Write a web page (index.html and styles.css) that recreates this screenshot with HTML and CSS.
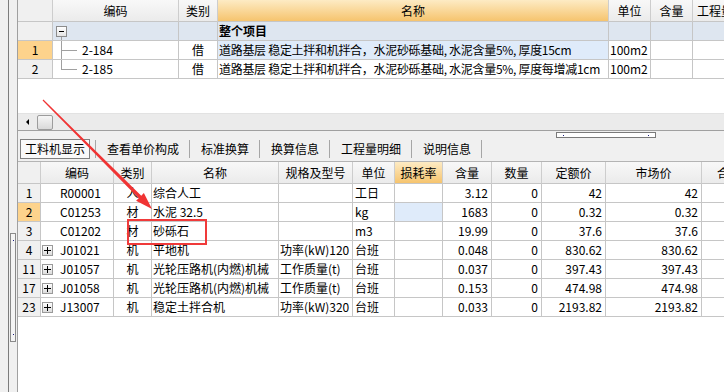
FILE: index.html
```html
<!DOCTYPE html>
<html lang="zh-CN">
<head>
<meta charset="utf-8">
<title>工料机显示</title>
<link rel="stylesheet" href="styles.css">
</head>
<body>
<div class="app">
  <div class="edge"></div>
  <div class="splitter"><div class="vgrip"><i></i><i></i></div></div>
  <div class="main">
    <section class="top-panel">
      <div class="grid top-grid">
        <div class="c hd rh"></div>
        <div class="c hd">编码</div>
        <div class="c hd">类别</div>
        <div class="c hd sel">名称</div>
        <div class="c hd">单位</div>
        <div class="c hd">含量</div>
        <div class="c hd lft">工程量</div>

        <div class="c rh"></div>
        <div class="c grp"><span class="mbox"></span></div>
        <div class="c grp"></div>
        <div class="c grp b">整个项目</div>
        <div class="c grp"></div>
        <div class="c grp"></div>
        <div class="c grp"></div>

        <div class="c rh cur">1</div>
        <div class="c code"><span class="tree"></span>2-184</div>
        <div class="c ctr">借</div>
        <div class="c name curcell">道路基层 稳定土拌和机拌合，水泥砂砾基础, 水泥含量5%, 厚度15cm</div>
        <div class="c unit">100m2</div>
        <div class="c"></div>
        <div class="c"></div>

        <div class="c rh">2</div>
        <div class="c code"><span class="tree last"></span>2-185</div>
        <div class="c ctr">借</div>
        <div class="c name">道路基层 稳定土拌和机拌合，水泥砂砾基础, 水泥含量5%, 厚度每增减1cm</div>
        <div class="c unit">100m2</div>
        <div class="c"></div>
        <div class="c"></div>
      </div>
      <div class="top-fill"></div>
      <div class="hscroll"><span class="larr"></span><span class="thumb"></span></div>
    </section>

    <div class="tabbar">
      <div class="hgrip"><i></i><i></i></div>
      <div class="tabs">
        <span class="tab active">工料机显示</span>
        <span class="tab">查看单价构成</span>
        <span class="tab">标准换算</span>
        <span class="tab">换算信息</span>
        <span class="tab">工程量明细</span>
        <span class="tab last">说明信息</span>
      </div>
    </div>

    <section class="bottom-panel">
      <div class="grid bot-grid">
        <div class="c hd rh"></div>
        <div class="c hd">编码</div>
        <div class="c hd">类别</div>
        <div class="c hd">名称</div>
        <div class="c hd">规格及型号</div>
        <div class="c hd">单位</div>
        <div class="c hd sel">损耗率</div>
        <div class="c hd">含量</div>
        <div class="c hd">数量</div>
        <div class="c hd">定额价</div>
        <div class="c hd">市场价</div>
        <div class="c hd lft2">合价</div>

        <div class="c rh">1</div>
        <div class="c code2"><span class="pbox blank"></span>R00001</div>
        <div class="c ctr">人</div>
        <div class="c txt">综合人工</div>
        <div class="c txt"></div>
        <div class="c txt2">工日</div>
        <div class="c"></div>
        <div class="c num">3.12</div>
        <div class="c num">0</div>
        <div class="c num">42</div>
        <div class="c num">42</div>
        <div class="c"></div>

        <div class="c rh cur">2</div>
        <div class="c code2"><span class="pbox blank"></span>C01253</div>
        <div class="c ctr">材</div>
        <div class="c txt">水泥 32.5</div>
        <div class="c txt"></div>
        <div class="c txt2">kg</div>
        <div class="c curcell"></div>
        <div class="c num">1683</div>
        <div class="c num">0</div>
        <div class="c num">0.32</div>
        <div class="c num">0.32</div>
        <div class="c"></div>

        <div class="c rh">3</div>
        <div class="c code2"><span class="pbox blank"></span>C01202</div>
        <div class="c ctr">材</div>
        <div class="c txt">砂砾石</div>
        <div class="c txt"></div>
        <div class="c txt2">m3</div>
        <div class="c"></div>
        <div class="c num">19.99</div>
        <div class="c num">0</div>
        <div class="c num">37.6</div>
        <div class="c num">37.6</div>
        <div class="c"></div>

        <div class="c rh">4</div>
        <div class="c code2"><span class="pbox"></span>J01021</div>
        <div class="c ctr">机</div>
        <div class="c txt">平地机</div>
        <div class="c txt">功率(kW)120</div>
        <div class="c txt2">台班</div>
        <div class="c"></div>
        <div class="c num">0.048</div>
        <div class="c num">0</div>
        <div class="c num">830.62</div>
        <div class="c num">830.62</div>
        <div class="c"></div>

        <div class="c rh">11</div>
        <div class="c code2"><span class="pbox"></span>J01057</div>
        <div class="c ctr">机</div>
        <div class="c txt">光轮压路机(内燃)机械</div>
        <div class="c txt">工作质量(t)</div>
        <div class="c txt2">台班</div>
        <div class="c"></div>
        <div class="c num">0.037</div>
        <div class="c num">0</div>
        <div class="c num">397.43</div>
        <div class="c num">397.43</div>
        <div class="c"></div>

        <div class="c rh">17</div>
        <div class="c code2"><span class="pbox"></span>J01058</div>
        <div class="c ctr">机</div>
        <div class="c txt">光轮压路机(内燃)机械</div>
        <div class="c txt">工作质量(t)</div>
        <div class="c txt2">台班</div>
        <div class="c"></div>
        <div class="c num">0.153</div>
        <div class="c num">0</div>
        <div class="c num">474.98</div>
        <div class="c num">474.98</div>
        <div class="c"></div>

        <div class="c rh">23</div>
        <div class="c code2"><span class="pbox"></span>J13007</div>
        <div class="c ctr">机</div>
        <div class="c txt">稳定土拌合机</div>
        <div class="c txt">功率(kW)320</div>
        <div class="c txt2">台班</div>
        <div class="c"></div>
        <div class="c num">0.033</div>
        <div class="c num">0</div>
        <div class="c num">2193.82</div>
        <div class="c num">2193.82</div>
        <div class="c"></div>
      </div>
    </section>
  </div>

  <svg class="annot" width="724" height="392" viewBox="0 0 724 392" aria-hidden="true">
    <polygon class="arrow" points="43.42,99.58 141.25,195.71 143.87,193.09 152,209 136.09,200.87 138.71,198.25 42.58,100.42"/>
    <rect class="box" x="128" y="220" width="78" height="24"/>
  </svg>
</div>
</body>
</html>
```

FILE: styles.css
```css
* { box-sizing: border-box; }
html, body { margin: 0; padding: 0; overflow: hidden; }
body {
  background: #f0f0f0;
  font-family: "Noto Sans CJK SC", "Noto Sans", sans-serif;
  font-size: 12px;
  color: #000;
}
.app {
  position: relative;
  width: 724px;
  height: 392px;
  display: flex;
  overflow: hidden;
}
.edge {
  width: 9px;
  flex: none;
  border-right: 1px solid #7c7c7c;
  background: #f0f0f0;
}
.splitter {
  width: 8px;
  flex: none;
  padding: 233px 0 0 1px;
}
.vgrip {
  width: 6px;
  height: 109px;
  border: 1px solid #8a8a8a;
  background: #f4f4f4;
  display: flex;
  flex-direction: column;
  justify-content: space-between;
  align-items: center;
  padding: 6px 0;
}
.vgrip i, .hgrip i {
  display: block;
  width: 1px;
  height: 1px;
  background: #1c1c7c;
}
.main {
  flex: 1;
  min-width: 0;
  border-left: 1px solid #a0a0a0;
  display: flex;
  flex-direction: column;
  overflow: hidden;
}

/* grids */
.grid { display: grid; flex: none; }
.top-grid {
  grid-template-columns: 35px 126px 39px 391px 42px 42px 80px;
  grid-template-rows: 22px repeat(3, 19px);
  width: 755px;
  background: #fff;
}
.bot-grid {
  grid-template-columns: 23px 73px 38px 127px 74px 42px 48px 49px 50px 64px 96px 80px;
  grid-template-rows: 22px repeat(7, 19px);
  width: 764px;
  border-top: 1px solid #b4b4b4;
  background: #fff;
}
.c {
  border-right: 1px solid #c6c6c6;
  border-bottom: 1px solid #c6c6c6;
  display: flex;
  align-items: center;
  white-space: nowrap;
  overflow: hidden;
  line-height: 18px;
  padding: 0;
}
.hd {
  justify-content: center;
  background: linear-gradient(#f8f8f8, #ebebeb);
  border-right-color: #cdcdcd;
}
.hd.sel { background: linear-gradient(#fdebc4, #f6c46e); }
.hd.lft { justify-content: flex-start; padding-left: 4px; }
.hd.lft2 { justify-content: flex-start; padding-left: 15px; }
.rh {
  justify-content: center;
  background: #f0f0f0;
}
.rh.cur { background: #fdd38c; }
.grp { background: #dee6f0; padding-left: 1px; }
.b { font-weight: bold; }
.ctr { justify-content: center; }
.name { padding-left: 1px; letter-spacing: -0.3px; }
.unit { padding-left: 1px; }
.curcell { background: #dfebfa; }
.txt { padding-left: 1px; }
.txt2 { padding-left: 2px; }
.num { justify-content: flex-end; padding-right: 3px; }

/* tree */
.mbox {
  position: relative;
  width: 11px;
  height: 11px;
  margin-left: 2px;
  border: 1px solid #8c8c8c;
  background: linear-gradient(#ffffff, #e4e4e4);
  display: flex;
  align-items: center;
  justify-content: center;
}
.mbox::before {
  content: "";
  width: 5px;
  height: 1px;
  background: #000;
}
.mbox::after {
  content: "";
  position: absolute;
  left: 4px;
  top: 10px;
  width: 1px;
  height: 5px;
  background: #a0a0a0;
}
.code { padding-left: 0; }
.tree {
  align-self: stretch;
  flex: none;
  width: 16px;
  margin-left: 8px;
  margin-right: 5px;
  background:
    linear-gradient(#a0a0a0, #a0a0a0) left top / 1px 100% no-repeat,
    linear-gradient(#a0a0a0, #a0a0a0) left 9px / 16px 1px no-repeat;
}
.tree.last {
  background:
    linear-gradient(#a0a0a0, #a0a0a0) left top / 1px 10px no-repeat,
    linear-gradient(#a0a0a0, #a0a0a0) left 9px / 16px 1px no-repeat;
}
.code2 { padding-left: 1px; }
.pbox {
  flex: none;
  width: 11px;
  height: 11px;
  margin-right: 7px;
  border: 1px solid #9a9a9a;
  background:
    linear-gradient(#000, #000) center / 7px 1px no-repeat,
    linear-gradient(#000, #000) center / 1px 7px no-repeat,
    linear-gradient(#fdfdfd, #dcdcdc);
}
.pbox.blank { visibility: hidden; }

/* top panel */
.top-panel {
  flex: none;
  display: flex;
  flex-direction: column;
  border-bottom: 1px solid #a0a0a0;
  background: #fff;
}
.top-fill { height: 34px; background: #fff; }
.hscroll {
  height: 17px;
  background: #ebebeb;
  border-top: 1px solid #e2e2e2;
  display: flex;
  align-items: center;
  padding-left: 8px;
}
.larr {
  width: 0;
  height: 0;
  border-top: 3px solid transparent;
  border-bottom: 3px solid transparent;
  border-right: 3px solid #000;
}
.thumb {
  width: 16px;
  height: 15px;
  margin-left: 8px;
  border: 1px solid #9c9c9c;
  border-radius: 2px;
  background: linear-gradient(#f6f6f6, #d9d9d9);
}

/* tab bar */
.tabbar {
  flex: none;
  height: 30px;
  padding-top: 1px;
  display: flex;
  flex-direction: column;
}
.hgrip {
  width: 100px;
  height: 6px;
  margin-left: 538px;
  border: 1px solid #7a7a7a;
  background: #fff;
  display: flex;
  justify-content: space-between;
  align-items: center;
  padding: 0 6px;
}
.tabs {
  margin-top: 1px;
  height: 20px;
  display: flex;
  align-items: center;
  padding-left: 2px;
}
.tab {
  height: 18px;
  line-height: 18px;
  padding: 0 10px 0 11px;
  border-left: 1px solid #a6a6a6;
}
.tab.last { border-right: 1px solid #a6a6a6; }
.tab.active {
  height: 20px;
  line-height: 18px;
  width: 70px;
  padding: 0 0 0 4px;
  border: 1px solid #808080;
  background: #f9f9f9;
  margin-right: 5px;
}

/* bottom panel */
.bottom-panel {
  flex: 1;
  background: #fff;
}

/* annotation overlay */
.annot {
  position: absolute;
  left: 0;
  top: 0;
  pointer-events: none;
}
.arrow { fill: #f03434; }
.box { fill: none; stroke: #f03a3a; stroke-width: 2; }
```
